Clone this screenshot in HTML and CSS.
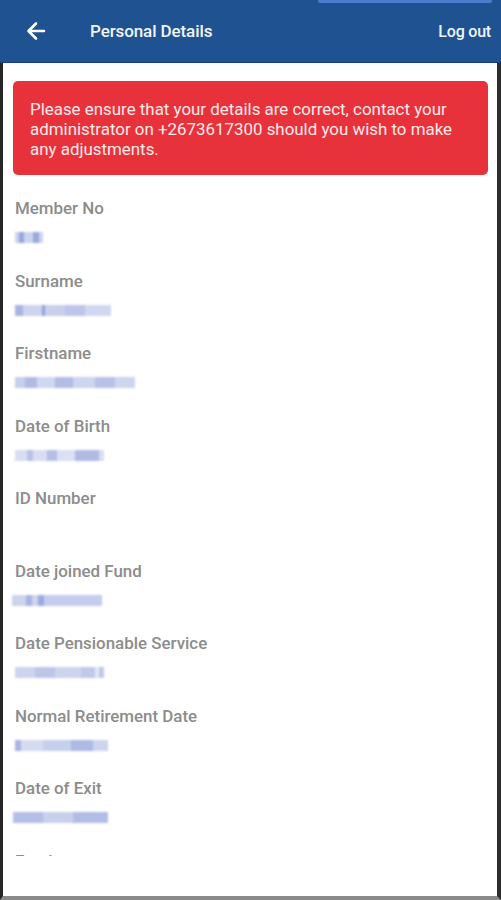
FILE: index.html
```html
<!DOCTYPE html>
<html>
<head>
<meta charset="utf-8">
<link rel="stylesheet" href="styles.css">
</head>
<body>
<div class="screen">
  <header class="appbar">
    <div class="topbar"></div>
    <button class="back" aria-label="Back">
      <svg width="24" height="24" viewBox="0 0 24 24"><path d="M20 12H5M12 4.5L4.5 12L12 19.5" fill="none" stroke="#fff" stroke-width="2.6" stroke-linecap="round" stroke-linejoin="round"/></svg>
    </button>
    <h1 class="title">Personal Details</h1>
    <span class="logout">Log out</span>
  </header>
  <main class="content">
    <div class="scroll">
      <div class="alert">Please ensure that your details are correct, contact your administrator on +2673617300 should you wish to make any adjustments.</div>
      <dl class="fields">
        <div class="field"><dt>Member No</dt><dd><span class="blur w28 p1"></span></dd></div>
        <div class="field"><dt>Surname</dt><dd><span class="blur w96 p2"></span></dd></div>
        <div class="field"><dt>Firstname</dt><dd><span class="blur w120 p3"></span></dd></div>
        <div class="field"><dt>Date of Birth</dt><dd><span class="blur w89 p4"></span></dd></div>
        <div class="field"><dt>ID Number</dt><dd></dd></div>
        <div class="field"><dt>Date joined Fund</dt><dd><span class="blur w90 p5"></span></dd></div>
        <div class="field"><dt>Date Pensionable Service</dt><dd><span class="blur w89 p6"></span></dd></div>
        <div class="field"><dt>Normal Retirement Date</dt><dd><span class="blur w93 p7"></span></dd></div>
        <div class="field"><dt>Date of Exit</dt><dd><span class="blur w95 p8"></span></dd></div>
        <div class="field"><dt>Fund</dt><dd></dd></div>
      </dl>
    </div>
  </main>
</div>
</body>
</html>
```
FILE: styles.css
```css
* { box-sizing: border-box; }
html, body { margin: 0; padding: 0; }
body {
  width: 501px;
  height: 900px;
  overflow: hidden;
  font-family: Roboto, "Noto Sans", sans-serif;
  background: #fff;
}
.screen {
  width: 501px;
  height: 900px;
  display: flex;
  flex-direction: column;
  overflow: hidden;
}
.appbar {
  position: relative;
  height: 63px;
  flex: none;
  background: #1f5291;
  display: flex;
  align-items: center;
  border-bottom: 1px solid #1a3f7a;
}
.topbar {
  position: absolute;
  top: 0;
  left: 318px;
  width: 174px;
  height: 3px;
  background: #4a7ccb;
  border-radius: 0 0 2px 2px;
}
.back {
  border: 0;
  background: none;
  padding: 0;
  margin: 0 0 0 24px;
  width: 24px;
  height: 24px;
  display: flex;
}
.title {
  margin: 0 0 0 42px;
  font-size: 17px;
  font-weight: 500;
  color: #f2f4f8;
  flex: 1;
  letter-spacing: -0.1px;
}
.logout {
  color: #f2f4f8;
  font-size: 16px;
  font-weight: 500;
  margin-right: 10px;
  letter-spacing: -0.2px;
}
.content {
  flex: 1;
  border-left: 3px solid #262626;
  border-right: 4px solid #2d2d2d;
  border-bottom: 4px solid #8a8a8a;
  overflow: hidden;
}
.scroll {
  height: 793px;
  overflow: hidden;
  padding: 18px 9px 0 10px;
}
.alert {
  background: #e8323b;
  color: #fbeaea;
  border-radius: 5px;
  padding: 18px 12px 16px 17px;
  font-size: 16.9px;
  line-height: 20px;
  letter-spacing: 0;
}
.fields {
  margin: 0 0 0 2px;
}
.field {
  height: 72.5px;
  padding-top: 23px;
}
.field dt {
  color: #8c8c8c;
  font-size: 16.9px;
  font-weight: 500;
  line-height: 20px;
  margin: 0;
}
.field dd {
  margin: 14px 0 0;
  height: 12px;
}
.blur {
  display: block;
  height: 11px;
  background: #c8d0ec;
  filter: blur(0.8px);
}
.w28 { width: 28px; }
.w96 { width: 96px; }
.w120 { width: 120px; }
.w89 { width: 89px; }
.w90 { width: 90px; margin-left: -3px; }
.w93 { width: 93px; }
.w95 { width: 95px; margin-left: -2px; }
.p1 { background: linear-gradient(90deg, #ccd4ef 0 4px, #97a6dc 4px 9px, #ccd4ef 9px 18px, #9aa9dd 18px 24px, #ccd4ef 24px); }
.p2 { background: linear-gradient(90deg, #a8b4e3 0 8px, #cdd4ee 8px 27px, #94a3d9 27px 30px, #c8d0ec 30px 50px, #bcc6e9 50px 70px, #d0d7f0 70px); }
.p3 { background: linear-gradient(90deg, #c6cfec 0 10px, #b0bbe5 10px 22px, #d0d7f0 22px 40px, #b2bde5 40px 58px, #ced5ef 58px 80px, #b8c2e8 80px 100px, #ced5ef 100px); }
.p4 { background: linear-gradient(90deg, #d8ddf2 0 12px, #b8c1e6 12px 18px, #d8ddf2 18px 32px, #b4bee6 32px 42px, #dbe0f4 42px 60px, #b0bbe4 60px 84px, #d8ddf2 84px); }
.p5 { background: linear-gradient(90deg, #cdd4ee 0 14px, #a8b4e3 14px 20px, #cdd4ee 20px 26px, #9cabdf 26px 32px, #c4cdec 32px 90px); }
.p6 { background: linear-gradient(90deg, #cdd4ee 0 20px, #bcc6e9 20px 40px, #cdd4ee 40px 66px, #c0c9ea 66px 80px, #e2e6f5 80px 84px, #c0c9ea 84px); }
.p7 { background: linear-gradient(90deg, #a8b4e3 0 6px, #d5dbf1 6px 28px, #c6cfec 28px 56px, #aeb9e4 56px 78px, #cdd4ee 78px); }
.p8 { background: linear-gradient(90deg, #b4bee6 0 30px, #c8d0ec 30px 60px, #b2bde5 60px); }
```
